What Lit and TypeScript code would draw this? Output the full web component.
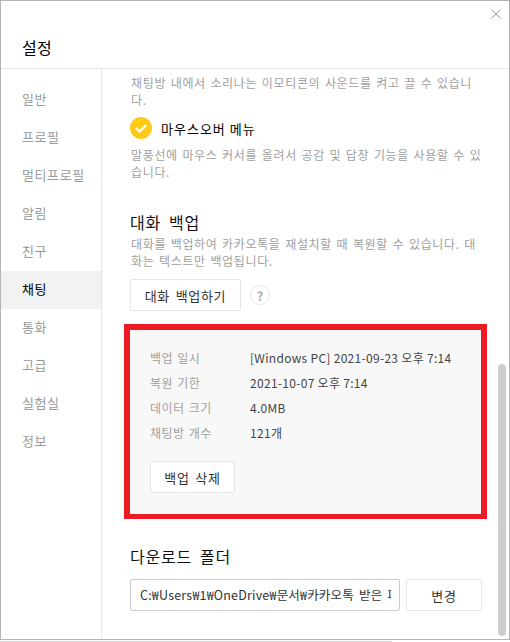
import { LitElement, html, css } from "lit";
import { customElement } from "lit/decorators.js";

const MENU = ["일반", "프로필", "멀티프로필", "알림", "친구", "채팅", "통화", "고급", "실험실", "정보"];
const INFO: [string, string][] = [
  ["백업 일시", "[Windows PC] 2021-09-23 오후 7:14"],
  ["복원 기한", "2021-10-07 오후 7:14"],
  ["데이터 크기", "4.0MB"],
  ["채팅방 개수", "121개"],
];

@customElement("app-root")
export class AppRoot extends LitElement {
  static styles = css`
    :host {
      display: block;
      width: 510px;
      height: 642px;
      background: #fff;
      font-family: "Noto Sans CJK KR", "Noto Sans", sans-serif;
      font-size: 13px;
      overflow: hidden;
    }
    .window {
      box-sizing: border-box;
      width: 510px;
      height: 640px;
      border: 1px solid #b4b4b4;
      position: relative;
      display: flex;
      flex-direction: column;
    }
    .under { width: 392px; height: 1px; margin-top: 1px; background: #cfcfcf; }
    header {
      height: 68px;
      flex: none;
      box-sizing: border-box;
      border-bottom: 1px solid #e6e6e6;
      padding: 35px 0 0 21px;
      font-size: 16px;
      letter-spacing: 0.4px;
      line-height: 22px;
      color: #000;
    }
    .close { position: absolute; top: 8px; right: 8px; width: 10px; height: 10px; }
    .body { flex: 1; display: flex; min-height: 0; }
    nav {
      width: 101px;
      flex: none;
      box-sizing: border-box;
      border-right: 1px solid #e6e6e6;
      padding-top: 12px;
    }
    .item {
      height: 38px;
      line-height: 36px;
      padding-left: 21px;
      color: #9a9a9a;
      letter-spacing: 0.6px;
    }
    .item.on { background: #f2f2f2; color: #000; }
    main { flex: 1; padding: 5px 0 0 28px; min-width: 0; position: relative; }
    .desc {
      color: #a0a0a0;
      font-size: 12px;
      line-height: 17px;
      letter-spacing: 0.65px;
      word-spacing: 1.3px;
      width: 352px;
      margin: 0;
      padding-left: 1px;
      box-sizing: border-box;
    }
    .check {
      display: flex;
      align-items: center;
      gap: 9px;
      height: 22px;
      margin: 9px 0 7px;
      color: #000;
      letter-spacing: 1px;
    }
    h2 {
      font-size: 16px;
      font-weight: 400;
      line-height: 22px;
      letter-spacing: 0.8px;
      word-spacing: 3.5px;
      margin: 31px 0 2px 0;
      color: #111;
    }
    .btn {
      box-sizing: border-box;
      height: 32px;
      border: 1px solid #e6e6e6;
      border-radius: 2px;
      background: #fff;
      display: flex;
      align-items: center;
      justify-content: center;
      color: #333;
      letter-spacing: 0.7px;
      word-spacing: 2px;
    }
    .backup-row { display: flex; align-items: center; gap: 9px; margin-top: 10px; }
    .backup { width: 111px; }
    .help {
      box-sizing: border-box;
      width: 20px;
      height: 20px;
      border: 1px solid #e6e6e6;
      border-radius: 50%;
      color: #aaa;
      font-size: 12px;
      font-weight: 700;
      display: flex;
      align-items: center;
      justify-content: center;
    }
    .panel {
      box-sizing: border-box;
      width: 363px;
      height: 195px;
      margin: 13px 0 0 -6px;
      border: 6px solid #ed1c24;
      border-bottom-width: 5px;
      background: #f8f8f8;
      padding: 15px 20px;
    }
    .row { display: flex; height: 25px; line-height: 25px; font-size: 12px; }
    .row .k { width: 100px; color: #a0a0a0; letter-spacing: 0.5px; word-spacing: 1px; }
    .row .v { color: #444; letter-spacing: 0.3px; }
    .del { width: 85px; margin-top: 16px; }
    .folder { display: flex; gap: 6px; }
    .path {
      box-sizing: border-box;
      width: 270px;
      height: 32px;
      border: 1px solid #ccc;
      border-radius: 2px;
      padding: 0 8px 0 9px;
      line-height: 30px;
      font-size: 12.5px;
      letter-spacing: 0.2px;
      word-spacing: 2px;
      color: #333;
    }
    .path div { white-space: nowrap; overflow: hidden; }
    .change { width: 76px; }
    h2.dl { margin: 26px 0 12px 0; }
    .thumb {
      position: absolute;
      left: 497px;
      top: 363px;
      width: 8px;
      height: 272px;
      border-radius: 4px;
      background: #cdcdcd;
    }
  `;

  render() {
    return html`
      <div class="window">
        <header>설정</header>
        <svg class="close" viewBox="0 0 10 10" fill="none" stroke="#9a9a9a" stroke-width="1">
          <path d="M0.5 0.5l9 9M9.5 0.5l-9 9"></path>
        </svg>
        <div class="body">
          <nav>
            ${MENU.map((m) => html`<div class="item ${m === "채팅" ? "on" : ""}">${m}</div>`)}
          </nav>
          <main>
            <p class="desc">채팅방 내에서 소리나는 이모티콘의 사운드를 켜고 끌 수 있습니다.</p>
            <div class="check">
              <svg width="22" height="22" viewBox="0 0 22 22">
                <circle cx="11" cy="11" r="11" fill="#fdcb17"></circle>
                <path d="M6 11l3.6 3.6L16 8.2" fill="none" stroke="#fff" stroke-width="2.4"></path>
              </svg>
              <span>마우스오버 메뉴</span>
            </div>
            <p class="desc">말풍선에 마우스 커서를 올려서 공감 및 답장 기능을 사용할 수 있습니다.</p>
            <h2>대화 백업</h2>
            <p class="desc">대화를 백업하여 카카오톡을 재설치할 때 복원할 수 있습니다. 대화는 텍스트만 백업됩니다.</p>
            <div class="backup-row">
              <div class="btn backup">대화 백업하기</div>
              <div class="help">?</div>
            </div>
            <div class="panel">
              ${INFO.map(([k, v]) => html`<div class="row"><span class="k">${k}</span><span class="v">${v}</span></div>`)}
              <div class="btn del">백업 삭제</div>
            </div>
            <h2 class="dl">다운로드 폴더</h2>
            <div class="folder">
              <div class="path"><div>C:₩Users₩1₩OneDrive₩문서₩카카오톡 받은 파일</div></div>
              <div class="btn change">변경</div>
            </div>
          </main>
        </div>
        <div class="thumb"></div>
      </div>
      <div class="under"></div>
    `;
  }
}
